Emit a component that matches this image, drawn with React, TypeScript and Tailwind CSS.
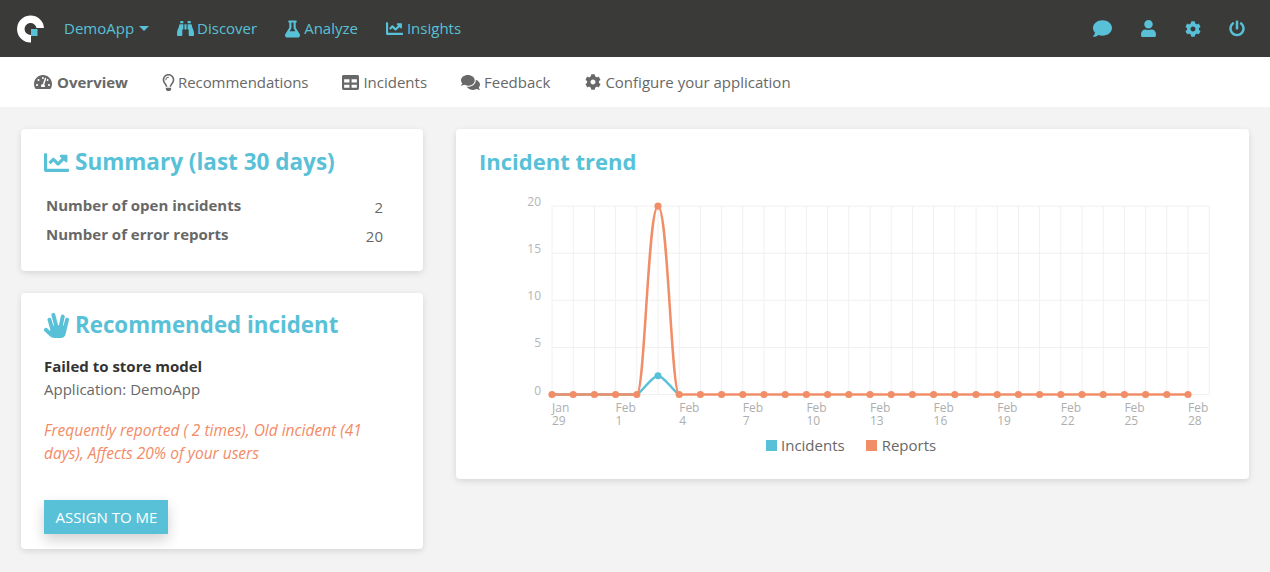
import {
  FaBinoculars,
  FaFlask,
  FaChartLine,
  FaTachometerAlt,
  FaRegLightbulb,
  FaTable,
  FaComments,
  FaCog,
  FaComment,
  FaUser,
  FaPowerOff,
  FaHandSpock,
} from 'react-icons/fa';

const X0 = 552;
const STEP = 21.2;
const Y0 = 394.5;
const OX = 456;
const OY = 129;

const px = (i: number) => X0 + STEP * i - OX;
const py = (v: number) => Y0 - v * 9.42 - OY;

const X_LABELS = [
  ['Jan', '29'],
  ['Feb', '1'],
  ['Feb', '4'],
  ['Feb', '7'],
  ['Feb', '10'],
  ['Feb', '13'],
  ['Feb', '16'],
  ['Feb', '19'],
  ['Feb', '22'],
  ['Feb', '25'],
  ['Feb', '28'],
];

function TrendChart() {
  const gridX = Array.from({ length: 32 }, (_, i) => i);
  const points = Array.from({ length: 31 }, (_, i) => i);
  const baseline = py(0);
  const reportPath = `M${px(0)} ${baseline} L${px(4)} ${baseline} C${px(4) + 8} ${baseline} ${px(5) - 10} ${py(20)} ${px(5)} ${py(20)} C${px(5) + 10} ${py(20)} ${px(6) - 8} ${baseline} ${px(6)} ${baseline} L${px(30)} ${baseline}`;
  const incidentPath = `M${px(0)} ${baseline} L${px(4)} ${baseline} C${px(4) + 6} ${baseline - 3} ${px(5) - 6} ${py(2)} ${px(5)} ${py(2)} C${px(5) + 6} ${py(2)} ${px(6) - 6} ${baseline - 3} ${px(6)} ${baseline}`;

  return (
    <svg width="793" height="350" className="absolute left-0 top-0" fontFamily="'Open Sans', sans-serif">
      {[0, 5, 10, 15, 20].map((v) => (
        <g key={v}>
          <line x1={px(0)} x2={px(31)} y1={py(v)} y2={py(v)} stroke="#f0f0f0" strokeWidth="1" />
          <text x={px(0) - 11} y={py(v) + 0} textAnchor="end" fontSize="12" fill="#b5b5b5">
            {v}
          </text>
        </g>
      ))}
      {gridX.map((i) => (
        <line key={i} x1={px(i)} x2={px(i)} y1={py(20)} y2={baseline} stroke="#f0f0f0" strokeWidth="1" />
      ))}
      <path d={incidentPath} fill="none" stroke="#58c1d7" strokeWidth="2.5" />
      <circle cx={px(5)} cy={py(2)} r="3.5" fill="#58c1d7" />
      <path d={reportPath} fill="none" stroke="#f18e68" strokeWidth="2.5" />
      {points.map((i) => (
        <circle key={i} cx={px(i)} cy={i === 5 ? py(20) : baseline} r="3.6" fill="#f18e68" />
      ))}
      {X_LABELS.map(([month, day], i) => (
        <text key={i} fontSize="12" fill="#aeaeae">
          <tspan x={px(i * 3)} y={283}>
            {month}
          </tspan>
          <tspan x={px(i * 3)} y={296}>
            {day}
          </tspan>
        </text>
      ))}
    </svg>
  );
}

function Logo() {
  return (
    <svg width="28" height="28" viewBox="0 0 28 28">
      <path d="M15 27.5 A13.5 13.5 0 1 1 28 13 L20.5 13 A6 6 0 1 0 15 20 Z" fill="#fff" />
      <rect x="15" y="14" width="6.5" height="7" fill="#58c1d7" />
    </svg>
  );
}

export default function App() {
  return (
    <div className="h-[572px] w-[1270px] overflow-hidden bg-[#f3f3f3] font-['Open_Sans',sans-serif] text-[15px] text-[#686868]">
      {/* Top bar */}
      <div className="flex h-[57px] items-center bg-[#3a3a38] pl-[16px] pr-[25px] text-[#58c1d7]">
        <Logo />
        <div className="ml-[20px] flex items-center gap-[28px]">
          <span className="flex items-center">
            DemoApp
            <span className="ml-[5px] h-0 w-0 border-x-[5px] border-t-[5px] border-x-transparent border-t-[#58c1d7]" />
          </span>
          <span className="flex items-center gap-[3px]">
            <FaBinoculars className="h-[17px] w-[17px]" />
            Discover
          </span>
          <span className="flex items-center gap-[4px]">
            <FaFlask className="h-[18px] w-[15px]" />
            Analyze
          </span>
          <span className="flex items-center gap-[4px]">
            <FaChartLine className="h-[17px] w-[17px]" />
            Insights
          </span>
        </div>
        <div className="ml-auto flex items-center gap-[28px]">
          <FaComment className="h-[19px] w-[19px]" />
          <FaUser className="h-[17px] w-[17px]" />
          <FaCog className="h-[16px] w-[16px]" />
          <FaPowerOff className="h-[17px] w-[16px]" />
        </div>
      </div>

      {/* Sub nav */}
      <div className="flex h-[50px] items-center gap-[34px] bg-white pl-[34px]">
        <span className="flex items-center gap-[5px] font-bold">
          <FaTachometerAlt className="h-[18px] w-[18px]" />
          Overview
        </span>
        <span className="flex items-center gap-[3px] tracking-[-0.06px]">
          <FaRegLightbulb className="h-[17px] w-[13px]" />
          Recommendations
        </span>
        <span className="flex items-center gap-[4px]">
          <FaTable className="h-[17px] w-[17px]" />
          Incidents
        </span>
        <span className="flex items-center gap-[4px]">
          <FaComments className="h-[17px] w-[19px]" />
          Feedback
        </span>
        <span className="ml-[1px] flex items-center gap-[4px]">
          <FaCog className="h-[16px] w-[16px]" />
          Configure your application
        </span>
      </div>

      {/* Content */}
      <div className="flex items-start gap-[33px] pl-[21px] pt-[22px]">
        <div className="flex w-[402px] flex-col gap-[22px]">
          <div className="h-[142px] rounded-[4px] bg-white px-[23px] pt-[18px] shadow-[0_2px_6px_rgba(0,0,0,0.12)]">
            <h2 className="flex items-center gap-[6px] text-[22.5px] font-bold leading-[30px] text-[#58c1d7]">
              <FaChartLine className="h-[25px] w-[25px]" />
              Summary (last 30 days)
            </h2>
            <div className="mt-[17px] flex justify-between pl-[2px] pr-[17px] font-bold">
              <span className="leading-[22px]">Number of open incidents</span>
              <span className="mt-[2px] font-normal leading-[22px]">2</span>
            </div>
            <div className="mt-[5px] flex justify-between pl-[2px] pr-[17px] font-bold">
              <span className="leading-[22px]">Number of error reports</span>
              <span className="mt-[2px] font-normal leading-[22px]">20</span>
            </div>
          </div>

          <div className="h-[256px] rounded-[4px] bg-white px-[23px] pt-[17px] shadow-[0_2px_6px_rgba(0,0,0,0.12)]">
            <h2 className="flex items-center gap-[6px] text-[22.3px] font-bold leading-[30px] text-[#58c1d7]">
              <FaHandSpock className="h-[25px] w-[25px]" />
              Recommended incident
            </h2>
            <p className="mt-[15px] font-bold leading-[23px] text-[#333]">Failed to store model</p>
            <p className="leading-[23px]">Application: DemoApp</p>
            <p className="mt-[18px] w-[330px] text-[15.5px] italic leading-[23px] text-[#f38b66]">
              Frequently reported ( 2 times), Old incident (41 days), Affects 20% of your users
            </p>
            <button className="mt-[35px] h-[34px] w-[124px] bg-[#58c1d7] pl-[1px] text-white shadow-[0_6px_14px_rgba(0,0,0,0.18)]">
              ASSIGN TO ME
            </button>
          </div>
        </div>

        <div className="relative h-[350px] w-[793px] rounded-[4px] bg-white shadow-[0_2px_6px_rgba(0,0,0,0.12)]">
          <TrendChart />
          <h2 className="relative px-[23px] pt-[17px] text-[22px] font-bold leading-[30px] text-[#58c1d7]">Incident trend</h2>
          <div className="absolute left-[310px] top-[306px] flex items-center gap-[21px] leading-[20px]">
            <span className="flex items-center gap-[4px]">
              <span className="h-[11px] w-[11px] bg-[#58c1d7]" />
              Incidents
            </span>
            <span className="flex items-center gap-[5px]">
              <span className="h-[11px] w-[11px] bg-[#f18e68]" />
              Reports
            </span>
          </div>
        </div>
      </div>
    </div>
  );
}
